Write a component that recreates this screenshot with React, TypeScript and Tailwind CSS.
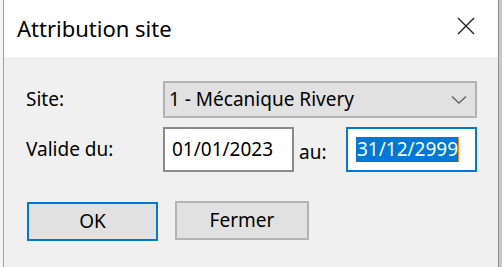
import React from "react";

export default function App() {
  const font = { fontFamily: '"Noto Sans", "Open Sans", sans-serif' };
  return (
    <div className="w-[502px] h-[267px] flex bg-[#f0f0f0] overflow-hidden" style={font}>
      <div className="w-[3px] bg-[#f4f4f4]" />
      <div className="w-px bg-[#a0a0a0]" />
      <div className="flex-1 flex flex-col bg-[#f0f0f0]">
        <div className="h-[57px] bg-white flex items-center justify-between pl-[13px] pr-[22px]">
          <span className="text-[22px] text-black leading-none pb-[2px]">Attribution site</span>
          <svg width="20" height="20" viewBox="0 0 20 20" className="mt-[-6px]">
            <path d="M2 2 L18 18 M18 2 L2 18" stroke="#222" strokeWidth="1.4" fill="none" />
          </svg>
        </div>
        <div className="flex flex-col pt-[24px] pl-[22px] text-[19px] text-black">
          <div className="flex items-center h-[37px]">
            <span className="w-[137px]">Site:</span>
            <div className="w-[314px] h-[37px] bg-[#e1e1e1] border-2 border-[#b3b3b3] flex items-center justify-between pl-[4px] pr-[8px]">
              <span>1 - Mécanique Rivery</span>
              <svg width="16" height="10" viewBox="0 0 16 10">
                <path d="M1 1.5 L8 8 L15 1.5" stroke="#606060" strokeWidth="1.3" fill="none" />
              </svg>
            </div>
          </div>
          <div className="flex items-center h-[45px] mt-[9px]">
            <span className="w-[137px]">Valide du:</span>
            <div className="w-[131px] h-[45px] bg-white border-2 border-[#8a8a8a] flex items-center pl-[7px]">
              <span>01/01/2023</span>
            </div>
            <span className="w-[52px] pl-[5px] pt-[6px]">au:</span>
            <div className="w-[131px] h-[45px] bg-white border-2 border-[#0078d7] flex items-center pl-[8px]">
              <span className="bg-[#0078d7] text-white h-[25px] leading-[25px] pl-px border-r border-[#ff8c00]">31/12/2999</span>
            </div>
          </div>
          <div className="flex items-start mt-[30px] gap-[17px]">
            <div className="ml-px w-[131px] h-[39px] bg-[#e1e1e1] border-2 border-[#0078d7] flex items-center justify-center">
              OK
            </div>
            <div className="mt-[-1px] w-[134px] h-[39px] bg-[#e1e1e1] border-2 border-[#b3b3b3] flex items-center justify-center">
              Fermer
            </div>
          </div>
        </div>
      </div>
      <div className="w-px bg-[#8c8c8c]" />
      <div className="w-[3px] bg-[#c9c9c9]" />
    </div>
  );
}
